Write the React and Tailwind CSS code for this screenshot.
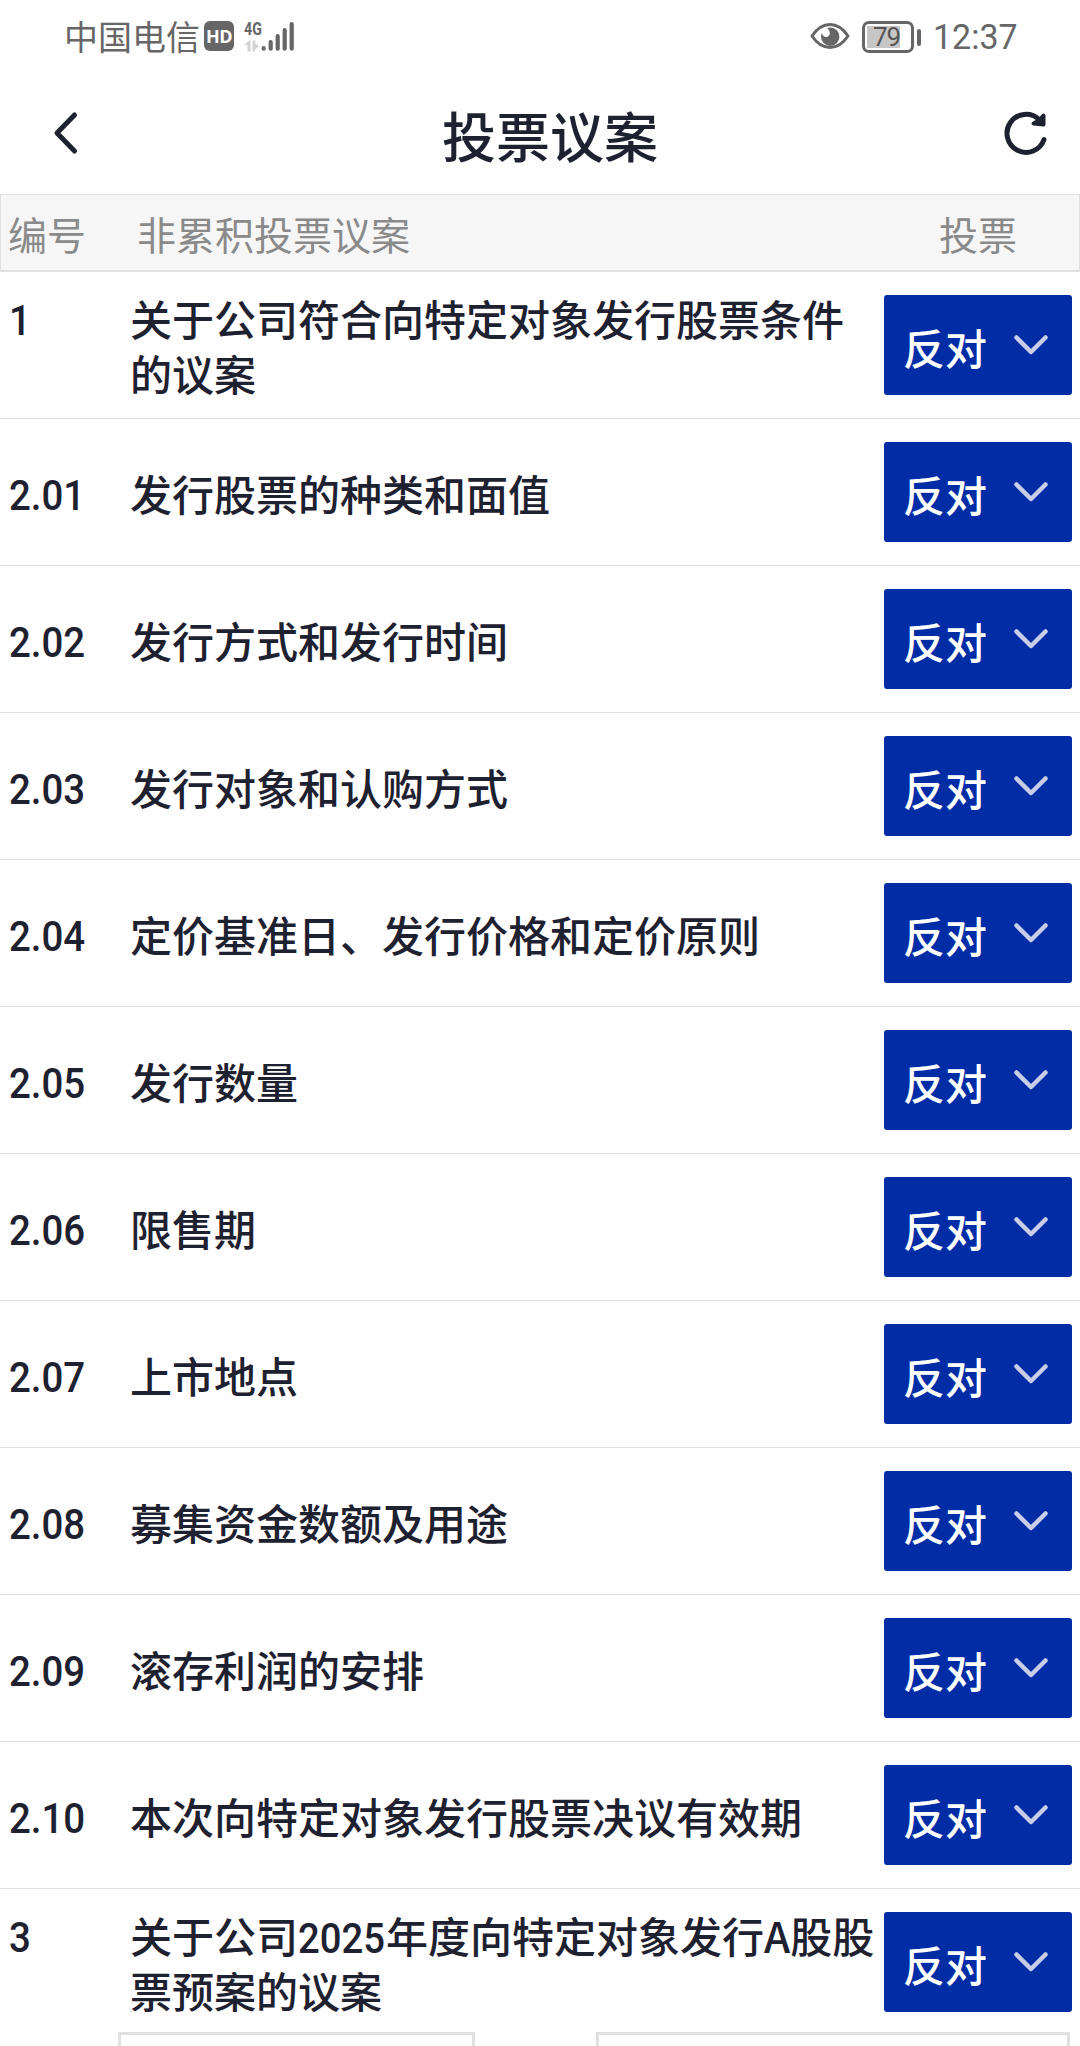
const rows = [
  { no: "1", title: ["关于公司符合向特定对象发行股票条件的议案"], top: true },
  { no: "2.01", title: ["发行股票的种类和面值"] },
  { no: "2.02", title: ["发行方式和发行时间"] },
  { no: "2.03", title: ["发行对象和认购方式"] },
  { no: "2.04", title: ["定价基准日、发行价格和定价原则"] },
  { no: "2.05", title: ["发行数量"] },
  { no: "2.06", title: ["限售期"] },
  { no: "2.07", title: ["上市地点"] },
  { no: "2.08", title: ["募集资金数额及用途"] },
  { no: "2.09", title: ["滚存利润的安排"] },
  { no: "2.10", title: ["本次向特定对象发行股票决议有效期"] },
  { no: "3", title: ["关于公司", "2025", "年度向特定对象发行A股股票预案的议案"], top: true },
];

function StatusBar() {
  return (
    <div className="flex h-[74px] shrink-0 items-center text-[#666]">
      <span className="mb-[3px] ml-[64px] w-[140px] whitespace-nowrap text-[34px] leading-[34px] font-normal">中国电信</span>
      <span className="mb-[2px] flex h-[30px] w-[30px] items-center justify-center rounded-[6px] bg-[#666] font-['Open_Sans'] text-[18px] font-bold leading-none tracking-[-0.5px] text-white">
        HD
      </span>
      <div className="ml-[10px] flex h-[32px] w-[17px] flex-col">
        <span className="h-[17px] origin-left scale-x-[0.75] whitespace-nowrap font-['Roboto'] text-[19px] leading-[16px] font-bold">4G</span>
        <svg className="mt-[2px]" width="16" height="12" viewBox="0 0 16 12" fill="#d2d2d2">
          <path d="M0.5 5L5 0.5H6.5V11.5H3.5V5ZM8.5 0.5H11.5V4L15 6L11.5 9L10.5 11.5H8.5Z" />
        </svg>
      </div>
      <svg width="34" height="32" viewBox="0 0 34 32" stroke="#666" strokeWidth="4.2" strokeLinecap="round">
        <path d="M2.700 27.200V27.700M9.700 21.200V27.700M16.700 15.200V27.700M23.700 9.200V27.700M30.700 3.200V27.700" />
      </svg>
      <svg className="mb-[2px] ml-auto" width="40" height="28" viewBox="0 0 40 28" fill="none">
        <path d="M2 14C7 6.500 13 2.500 20 2.500S33 6.500 38 14C33 21.500 27 25.500 20 25.500S7 21.500 2 14Z" stroke="#666" strokeWidth="3" strokeLinejoin="round" />
        <path d="M20 5.500A9.200 9.200 0 1 1 11 14.500C11 13.500 11.300 12.300 12 11C12.500 14.300 15 15.500 17.500 14.700C20.500 13.500 20.800 9.500 17.300 6C18 5.700 19 5.500 20 5.500Z" fill="#666" />
      </svg>
      <div className="mb-[1px] ml-[12px] flex h-[32px] w-[52px] rounded-[7px] border-[3px] border-[#666] p-[2px]">
        <span className="flex w-[33px] items-center bg-[#c6c6c6] pl-[6px] font-['Roboto'] text-[26px] leading-none font-normal tracking-[-1px] text-[#555]">
          79
        </span>
      </div>
      <div className="ml-[3px] h-[17px] w-[4px] rounded-[2px] bg-[#666]" />
      <span className="mr-[63px] ml-[12px] w-[84px] origin-left scale-x-[0.97] pt-[1px] whitespace-nowrap font-['Roboto'] text-[35px] leading-none font-normal">12:37</span>
    </div>
  );
}

function TitleBar() {
  return (
    <div className="flex h-[120px] shrink-0 items-center text-[#1e2130]">
      <svg className="mb-[3px] ml-[49px]" width="32" height="46" viewBox="0 0 32 46" fill="none">
        <path d="M25.500 5L8 23L25.500 41" stroke="#1e2130" strokeWidth="5" strokeLinecap="round" strokeLinejoin="round" />
      </svg>
      <h1 className="ml-[361px] pt-[2px] text-[54px] leading-none font-medium">投票议案</h1>
      <svg className="mr-[29px] mb-[3px] ml-auto" width="50" height="50" viewBox="0 0 50 50" fill="none" stroke="#1e2130" strokeWidth="5" strokeLinecap="round" strokeLinejoin="round">
        <path d="M43 31.500A19 19 0 1 1 38 11.500" />
        <path d="M42.500 7.500V16.500L32.500 15.500L38 12.500Z" fill="#1e2130" strokeWidth="4" />
      </svg>
    </div>
  );
}

function VoteButton() {
  return (
    <button className="mr-[8px] flex h-[100px] w-[188px] shrink-0 items-center rounded-[3px] bg-[#002da6] pt-[3px] pl-[19px] text-[42px] leading-none font-medium text-white">
      反对
      <svg className="mb-[3px] ml-[25px]" width="38" height="24" viewBox="0 0 38 24" fill="none">
        <path d="M4.500 4.500L19 19L33.500 4.500" stroke="#c9cde8" strokeWidth="4.500" strokeLinecap="round" strokeLinejoin="round" />
      </svg>
    </button>
  );
}

function Row({ no, title, top }) {
  return (
    <div className="flex h-[147px] shrink-0 items-center border-b border-[#e0e0e0]">
      <div className={top ? "w-[130px] self-start pt-[21px] pl-[9px]" : "w-[130px] pt-[6px] pl-[9px]"}>
        <span className="block origin-left scale-x-[0.915] font-['Roboto'] leading-[55px]">{no}</span>
      </div>
      <div className={top ? "w-[754px] self-start pt-[18px] leading-[55px]" : "w-[754px] pt-[1px] leading-[55px]"}>
        {title.map((part) =>
          part === "2025" ? (
            <span key={part} className="inline-block h-[40px] w-[88px] origin-left scale-x-[0.91] font-['Roboto'] leading-[40px]">
              {part}
            </span>
          ) : (
            <span key={part}>{part}</span>
          ),
        )}
      </div>
      <VoteButton />
    </div>
  );
}

export default function App() {
  return (
    <div className="flex h-[2046px] w-[1080px] flex-col overflow-hidden bg-[#fefefe] font-['Noto_Sans_CJK_SC',sans-serif]">
      <StatusBar />
      <TitleBar />
      <div className="flex h-[78px] shrink-0 items-center border border-b-2 border-[#e0e0e0] bg-[#f6f6f6] pt-[1px] text-[39px] leading-none text-[#8a8a8a]">
        <span className="ml-[7px] w-[129px]">编号</span>
        <span>非累积投票议案</span>
        <span className="mr-[62px] ml-auto">投票</span>
      </div>
      <div className="flex min-h-0 flex-1 flex-col overflow-hidden text-[42px] font-medium text-[#1e2130]">
        {rows.map((r) => (
          <Row key={r.no} {...r} />
        ))}
      </div>
      <div className="flex h-[14px] shrink-0 pl-[118px]">
        <div className="w-[357px] border-3 border-b-0 border-[#e0e0e0]" />
        <div className="ml-[121px] w-[474px] border-3 border-b-0 border-[#e0e0e0]" />
      </div>
    </div>
  );
}
